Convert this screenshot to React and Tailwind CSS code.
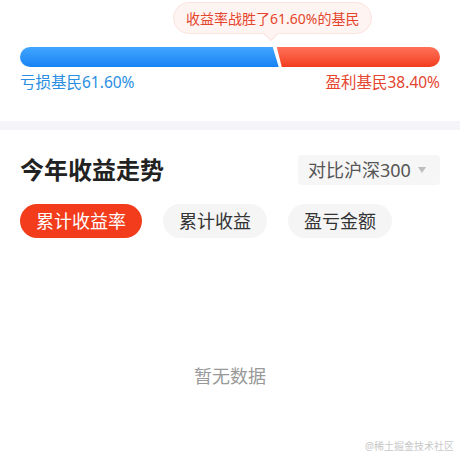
import React from 'react';

const LOSS = 61.6;
const tabs = ['累计收益率', '累计收益', '盈亏金额'];

const App = () => {
  return (
    <div
      className="w-[460px] h-[460px] bg-white relative overflow-hidden"
      style={{ fontFamily: '"Noto Sans", "Noto Sans CJK SC", sans-serif' }}
    >
      {/* 对比条 */}
      <div className="px-5 pt-[2px]">
        <div className="flex pl-[153px]">
          <div className="relative h-[32px] px-3 flex items-center rounded-full bg-[#fef4f2] border border-[#fce3df] text-[14px] text-[#e5452c]">
            收益率战胜了61.60%的基民
            <span className="absolute left-[92px] -bottom-[6px] w-[10px] h-[10px] rotate-45 bg-[#fef4f2] border-r border-b border-[#fce3df]"></span>
          </div>
        </div>
        <div className="flex h-[20px] mt-[13px]">
          <div
            className="h-full rounded-l-full bg-gradient-to-b from-[#41a6ff] to-[#1683f3] [clip-path:polygon(0_0,calc(100%-6px)_0,100%_100%,0_100%)]"
            style={{ width: `${LOSS}%` }}
          ></div>
          <div className="h-full flex-1 -ml-[2px] rounded-r-full bg-gradient-to-b from-[#ff7157] to-[#f23b1c] [clip-path:polygon(0_0,100%_0,100%_100%,5px_100%)]"></div>
        </div>
        <div className="flex justify-between mt-[5px] text-[15.5px] leading-[20px]">
          <span className="text-[#2a8ee2]">亏损基民61.60%</span>
          <span className="text-[#e5452f]">盈利基民38.40%</span>
        </div>
      </div>

      <div className="h-[9px] bg-[#f5f5f9] mt-[29px]"></div>

      {/* 今年收益走势 */}
      <div className="px-5 pt-[25px]">
        <div className="flex items-center justify-between">
          <h2 className="text-[24px] font-bold text-[#222] leading-[30px]">今年收益走势</h2>
          <div className="h-[30px] w-[142px] flex items-center pl-[10px] rounded-[4px] bg-[#f6f6f6] text-[18px] text-[#555]">
            对比沪深300
            <span className="ml-[7px] w-0 h-0 border-l-[4px] border-r-[4px] border-t-[6px] border-l-transparent border-r-transparent border-t-[#bdbdbd]"></span>
          </div>
        </div>
        <div className="flex gap-[21px] mt-[19px]">
          {tabs.map((t, i) => (
            <button
              key={t}
              className={
                i === 0
                  ? 'h-[34px] px-4 rounded-full bg-[#f23c1c] text-white text-[18px]'
                  : 'h-[34px] px-4 rounded-full bg-[#f5f5f5] text-[#333] text-[18px]'
              }
            >
              {t}
            </button>
          ))}
        </div>
      </div>

      <div className="mt-[126px] text-center text-[18px] leading-[24px] text-[#999]">暂无数据</div>

      <div className="absolute right-[6px] bottom-[6px] text-[10px] text-[#c8c8c8]">@稀土掘金技术社区</div>
    </div>
  );
};

export default App;
